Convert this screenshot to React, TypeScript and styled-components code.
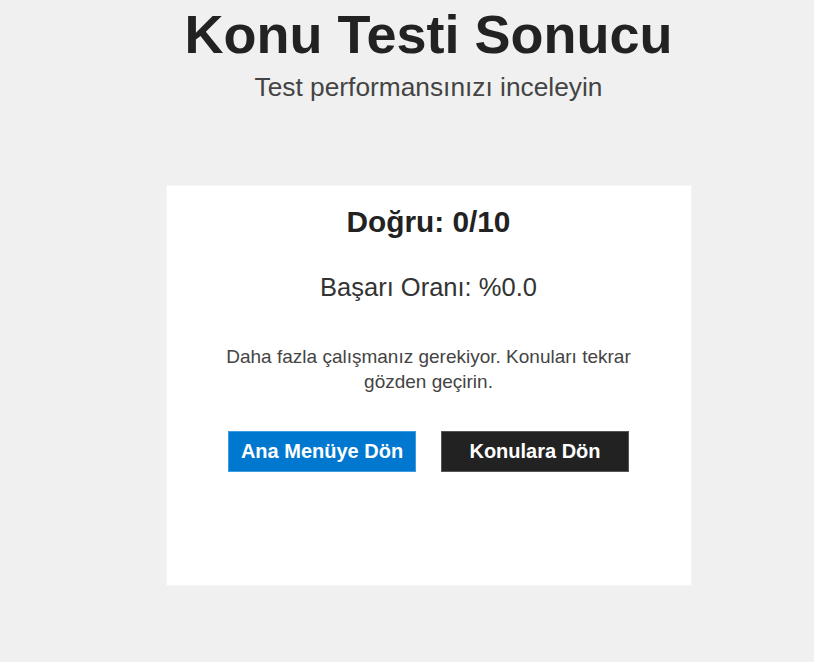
import React from "react";
import styled, { createGlobalStyle } from "styled-components";

const Global = createGlobalStyle`
  html, body {
    margin: 0;
    padding: 0;
    background: #f0f0f0;
    font-family: "Liberation Sans", Arial, sans-serif;
  }
`;

const Page = styled.main`
  display: flex;
  flex-direction: column;
  align-items: center;
  padding: 4px 0 0 43px;
`;

const Title = styled.h1`
  margin: 0;
  font-size: 54px;
  line-height: 60px;
  font-weight: 700;
  color: #222;
  text-align: center;
`;

const Subtitle = styled.p`
  margin: 8px 0 0;
  font-size: 26.3px;
  line-height: 30px;
  color: #444;
  text-align: center;
`;

const Card = styled.section`
  margin-top: 83px;
  width: 526px;
  height: 401px;
  box-sizing: border-box;
  background: #fff;
  border: 1px solid #f5f5f5;
  padding-top: 19px;
  display: flex;
  flex-direction: column;
  align-items: center;
`;

const Score = styled.h2`
  margin: 0;
  font-size: 29.8px;
  line-height: 34px;
  font-weight: 700;
  color: #222;
`;

const Rate = styled.p`
  margin: 33px 0 0;
  font-size: 25.5px;
  line-height: 30px;
  color: #333;
`;

const Message = styled.p`
  margin: 42px 0 0;
  max-width: 430px;
  font-size: 19px;
  line-height: 25px;
  color: #444;
  text-align: center;
`;

const Actions = styled.div`
  margin-top: 37px;
  display: flex;
  gap: 25px;
`;

const Button = styled.button<{ $variant: "primary" | "dark" }>`
  width: 188px;
  height: 41px;
  box-sizing: border-box;
  font-family: "Liberation Sans", Arial, sans-serif;
  font-size: 20px;
  font-weight: 700;
  color: #fff;
  cursor: pointer;
  background: ${(p) => (p.$variant === "primary" ? "#0078d0" : "#222")};
  border: 1px solid ${(p) => (p.$variant === "primary" ? "#3d9be0" : "#555")};
  padding: 0;
`;

export default function App() {
  return (
    <>
      <Global />
      <Page>
        <Title>Konu Testi Sonucu</Title>
        <Subtitle>Test performansınızı inceleyin</Subtitle>
        <Card>
          <Score>Doğru: 0/10</Score>
          <Rate>Başarı Oranı: %0.0</Rate>
          <Message>Daha fazla çalışmanız gerekiyor. Konuları tekrar gözden geçirin.</Message>
          <Actions>
            <Button $variant="primary">Ana Menüye Dön</Button>
            <Button $variant="dark">Konulara Dön</Button>
          </Actions>
        </Card>
      </Page>
    </>
  );
}
